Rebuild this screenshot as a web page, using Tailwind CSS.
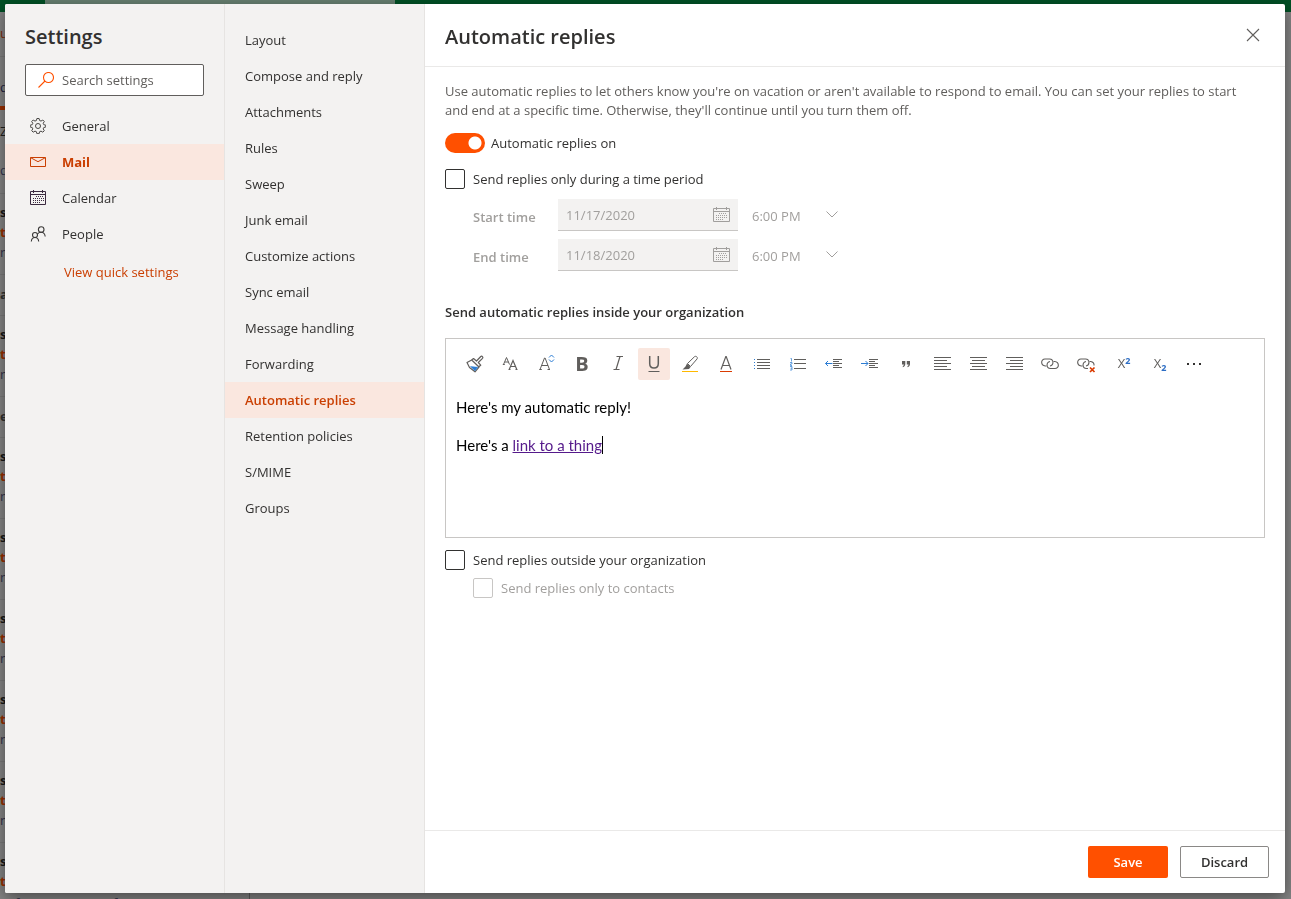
<!DOCTYPE html>
<html lang="en">
<head>
<meta charset="utf-8">
<title>Settings - Automatic replies</title>
<script src="https://cdn.jsdelivr.net/npm/@tailwindcss/browser@4"></script>
</head>
<body class="h-screen overflow-hidden bg-[#858585] font-['Open_Sans','Noto_Sans',sans-serif] text-[13px] text-[#323130]">

<!-- Dimmed mailbox behind the dialog -->
<div class="relative flex h-screen flex-col overflow-hidden" aria-hidden="true">
  <div class="flex h-3 shrink-0 bg-[#005025] pl-[45px]"><div class="w-[350px] bg-[#667f70]"></div></div>
  <div class="flex min-h-0 w-[5px] grow flex-col overflow-hidden *:flex *:shrink-0 *:flex-col *:items-start *:border-b *:border-[#7a7a7a]">
    <div class="h-[45px] justify-center text-[#7d2c0c]">u</div>
    <div class="h-[137px] text-[#1d2140]">
      <span class="pt-[21px]">d</span><span class="mt-2 h-1 w-full shrink-0 bg-[#9b3000]"></span>
      <span class="mt-3 text-[#202020]">Z</span><span class="mt-5 text-[#34344c]">d</span>
    </div>
    <div class="h-[81px] pt-2 leading-5"><b class="text-[#181818]">s</b><b class="text-[#9b3000]">t</b><span class="text-[#34344c]">n</span></div>
    <div class="h-[41px] justify-center font-bold">a</div>
    <div class="h-[81px] pt-2 leading-5"><b class="text-[#181818]">s</b><b class="text-[#9b3000]">t</b><span class="text-[#34344c]">n</span></div>
    <div class="h-[41px] justify-center font-bold">e</div>
    <div class="h-[81px] pt-2 leading-5"><b class="text-[#181818]">s</b><b class="text-[#9b3000]">t</b><span class="text-[#34344c]">n</span></div>
    <div class="h-[81px] pt-2 leading-5"><b class="text-[#181818]">s</b><b class="text-[#9b3000]">t</b><span class="text-[#34344c]">n</span></div>
    <div class="h-[81px] pt-2 leading-5"><b class="text-[#181818]">s</b><b class="text-[#9b3000]">t</b><span class="text-[#34344c]">n</span></div>
    <div class="h-[81px] pt-2 leading-5"><b class="text-[#181818]">s</b><b class="text-[#9b3000]">t</b><span class="text-[#34344c]">n</span></div>
    <div class="h-[81px] pt-2 leading-5"><b class="text-[#181818]">s</b><b class="text-[#9b3000]">t</b><span class="text-[#34344c]">n</span></div>
    <div class="h-[81px] pt-2 leading-5"><b class="text-[#181818]">s</b><b class="text-[#9b3000]">t</b></div>
  </div>
  <div class="flex h-1.5 shrink-0 overflow-hidden border-r border-[#5c5c5c] pl-[15px] leading-5 text-[#34344c] w-[250px]">
    <span class="w-[98px]">f</span><span class="w-[74px]">f</span><span>i</span>
  </div>
</div>

<div class="fixed inset-0 flex pt-1 pr-1.5 pb-1.5 pl-[5px]">
<section role="dialog" aria-labelledby="dialog-title" class="flex min-w-0 grow overflow-hidden rounded-xs bg-white shadow-[0_5px_16px_rgba(0,0,0,0.45)]">

  <!-- Categories -->
  <aside class="flex w-[220px] shrink-0 flex-col border-r border-[#e6e4e2] bg-[#f3f2f1]">
    <h1 class="mx-5 mt-[19px] mb-[13px] text-xl leading-7 font-semibold">Settings</h1>
    <label class="mx-5 flex h-8 items-center gap-2 rounded-xs border border-[#605e5c] bg-white px-3">
      <svg class="size-4 shrink-0" viewBox="0 0 16 16" fill="none" stroke="#ff5000" stroke-width="1.1"><circle cx="10.5" cy="5.5" r="5"/><path d="M7 9 0.5 15.5"/></svg>
      <input type="text" aria-label="Search settings" placeholder="Search settings" class="min-w-0 grow pt-0.5 outline-none placeholder:text-[#605e5c]">
    </label>
    <nav class="mt-3 flex flex-col [&_span]:pt-0.5" aria-label="Categories">
      <a href="#general" class="flex h-9 items-center gap-4 pl-[25px]">
        <svg class="size-4" viewBox="0 0 16 16" fill="none" stroke="#484644"><circle cx="8" cy="8" r="2.5"/><path stroke-linejoin="round" d="M6.900 .5h2.200l.5 2 1.400.6 1.800-1.100 1.500 1.500-1.100 1.800.6 1.400 2 .5v1.800l-2 .5-.6 1.400 1.100 1.800-1.500 1.500-1.800-1.100-1.400.6-.5 2H6.900l-.5-2-1.400-.6-1.800 1.100-1.500-1.500 1.100-1.800-.6-1.400-2-.5V7.200l2-.5.6-1.400-1.100-1.800 1.500-1.500L5 3.100l1.400-.6z"/></svg>
        <span>General</span></a>
      <a href="#mail" aria-current="page" class="flex h-9 items-center gap-4 bg-[#fae7df] pl-[25px] font-bold text-[#ca3f02]">
        <svg class="size-4" viewBox="0 0 16 16" fill="none" stroke="#ca3f02"><path d="M.5 3.500h15v9H.5zM.7 3.700 8 7.700l7.300-4"/></svg>
        <span>Mail</span></a>
      <a href="#calendar" class="flex h-9 items-center gap-4 pl-[25px]">
        <svg class="size-4" viewBox="0 0 16 16" fill="none" stroke="#3b2a40"><path d="M.5 1.500h15v13H.5zM.5 4.500h15M3.500 0v3M12.500 0v3"/><path stroke-dasharray="1 1" d="M6 6.500h8M3 8.500h11M3 10.500h11M3 12.500h8"/></svg>
        <span>Calendar</span></a>
      <a href="#people" class="flex h-9 items-center gap-4 pl-[25px]">
        <svg class="size-4" viewBox="0 0 16 16" fill="none" stroke="#3b3a39" stroke-width="1.1"><circle cx="11.200" cy="3.500" r="2.800"/><circle cx="5" cy="9" r="2.500"/><path d="M1.300 15.500c.2-2.500 1.700-4 3.700-4s3.500 1.500 3.700 4M7.500 8c.8-1.100 2.200-1.700 3.700-1.700 2.100 0 3.700 1.600 4 4.200"/></svg>
        <span>People</span></a>
    </nav>
    <a href="#quick" class="mt-2.5 ml-[59px] leading-5 text-[#ca3f02]">View quick settings</a>
  </aside>

  <!-- Mail sections -->
  <nav aria-label="Mail settings" class="flex w-[200px] shrink-0 flex-col border-r border-[#e6e4e2] bg-[#f3f2f1] pt-[18px] *:flex *:h-9 *:items-center *:pt-0.5 *:pl-5">
    <a href="#layout">Layout</a>
    <a href="#compose">Compose and reply</a>
    <a href="#attachments">Attachments</a>
    <a href="#rules">Rules</a>
    <a href="#sweep">Sweep</a>
    <a href="#junk">Junk email</a>
    <a href="#actions">Customize actions</a>
    <a href="#sync">Sync email</a>
    <a href="#handling">Message handling</a>
    <a href="#forwarding">Forwarding</a>
    <a href="#replies" aria-current="page" class="bg-[#fae7df] font-semibold text-[#ca3f02]">Automatic replies</a>
    <a href="#retention">Retention policies</a>
    <a href="#smime">S/MIME</a>
    <a href="#groups">Groups</a>
  </nav>

  <!-- Automatic replies -->
  <main class="flex min-w-0 grow flex-col">
    <header class="flex h-[63px] shrink-0 items-center justify-between border-b border-[#eae9e8] pt-0.5 pr-6 pl-5">
      <h2 id="dialog-title" class="pt-0.5 text-xl font-semibold">Automatic replies</h2>
      <button type="button" aria-label="Close" class="size-4"><svg viewBox="0 0 16 16" fill="none" stroke="#605e5c" stroke-width="1.100"><path d="m2 1 12 12M14 1 2 13"/></svg></button>
    </header>

    <div class="flex grow flex-col px-5 pt-[15px]">
      <p class="pr-3 leading-[19px] text-[#605e5c]">Use automatic replies to let others know you're on vacation or aren't available to respond to email. You can set your replies to start and end at a specific time. Otherwise, they'll continue until you turn them off.</p>

      <label class="mt-[13px] flex h-5 items-center gap-1.5">
        <input type="checkbox" role="switch" checked class="h-5 w-10 appearance-none rounded-full bg-[#ff5000] bg-[radial-gradient(circle_at_30px_10px,white_6px,transparent_7px)]">
        <span class="pt-0.5">Automatic replies on</span>
      </label>
      <label class="mt-4 flex h-5 items-center gap-2">
        <input type="checkbox" class="size-5 appearance-none rounded-xs border border-[#323130] bg-white">
        <span class="pt-0.5">Send replies only during a time period</span>
      </label>

      <div class="mt-2.5 ml-7 flex flex-col gap-2 text-[#a19f9d]">
        <div class="flex h-8 items-center">
          <label for="start" class="w-[85px] pt-1.5 font-semibold">Start time</label>
          <div class="flex h-8 w-[180px] items-center border-b border-[#c8c6c4] bg-[#f3f2f1] px-2">
            <input id="start" type="text" value="11/17/2020" disabled class="min-w-0 grow pt-0.5">
            <svg class="size-[17px] shrink-0" viewBox="0 0 17 17" fill="none" stroke="#a19f9d"><path d="M.5 2.500h16v13H.5zM.5 5.500h16M3.500 1v3M13.500 1v3"/><path stroke-dasharray="1 1" d="M6 7.500h8M3 9.500h11M3 11.500h11M3 13.500h8"/></svg>
          </div>
          <div class="ml-3.5 grid w-[86px] items-center">
            <select disabled aria-label="Start hour" class="col-start-1 row-start-1 appearance-none pt-1"><option>6:00 PM</option></select>
            <svg class="col-start-1 row-start-1 h-2 w-3 justify-self-end" viewBox="0 0 12 8" fill="none" stroke="#a19f9d"><path d="m.5 .5 5.500 5.500L11.500 .5"/></svg>
          </div>
        </div>
        <div class="flex h-8 items-center">
          <label for="end" class="w-[85px] pt-1.5 font-semibold">End time</label>
          <div class="flex h-8 w-[180px] items-center border-b border-[#c8c6c4] bg-[#f3f2f1] px-2">
            <input id="end" type="text" value="11/18/2020" disabled class="min-w-0 grow pt-0.5">
            <svg class="size-[17px] shrink-0" viewBox="0 0 17 17" fill="none" stroke="#a19f9d"><path d="M.5 2.500h16v13H.5zM.5 5.500h16M3.500 1v3M13.500 1v3"/><path stroke-dasharray="1 1" d="M6 7.500h8M3 9.500h11M3 11.500h11M3 13.500h8"/></svg>
          </div>
          <div class="ml-3.5 grid w-[86px] items-center">
            <select disabled aria-label="End hour" class="col-start-1 row-start-1 appearance-none pt-1"><option>6:00 PM</option></select>
            <svg class="col-start-1 row-start-1 h-2 w-3 justify-self-end" viewBox="0 0 12 8" fill="none" stroke="#a19f9d"><path d="m.5 .5 5.500 5.500L11.500 .5"/></svg>
          </div>
        </div>
      </div>

      <h3 class="mt-[31px] leading-5 font-semibold">Send automatic replies inside your organization</h3>

      <div class="mt-4 flex h-[200px] flex-col border border-[#c8c6c4]">
        <div role="toolbar" aria-label="Formatting" class="flex gap-1 px-3 pt-[9px] text-[#605e5c] *:flex *:size-8 *:shrink-0 *:items-center *:justify-center [&_svg]:size-5">
          <button type="button" aria-label="Format painter"><svg viewBox="0 0 20 20" fill="none" stroke="#605e5c" stroke-width="1.200" stroke-linejoin="round"><path d="M9.500 4.500 12.500 7l4.300-4.500c1-1 2.700.7 1.700 1.800L14.300 8.500l2.400 2.700-2 1.600L7.700 6z"/><path d="M7.700 6 3 8.500l2.500 5 5.500 4.300 4.200-5"/><path fill="#2b7cd3" stroke="#2b7cd3" stroke-width=".5" d="m6.500 12.500 7.300.8-2.800 3.500z"/></svg></button>
          <button type="button" aria-label="Font"><svg viewBox="0 0 20 20" fill="none" stroke="#605e5c"><path d="M3.500 10.500 6.500 3.500l3 7M4.700 8h3.800M2.800 10.500h2"/><path stroke-width="1.200" d="m9.200 15.500 3.800-9 3.800 9M10.700 12.500h4.800M8.500 15.500h2M15.500 15.500h2"/></svg></button>
          <button type="button" aria-label="Font size"><svg viewBox="0 0 20 20" fill="none" stroke="#605e5c"><path d="M4 15.500 8.500 4h.6L13.500 15.500M5.500 11.500h6.500M3.300 15.500h2.500M11.500 15.500h2.500"/><path stroke="#2b7cd3" d="m13 3.500 2.500-2.500 2.500 2.500M13 5.500 15.500 8l2.500-2.500"/></svg></button>
          <button type="button" aria-label="Bold" class="text-xl leading-5 font-bold">B</button>
          <button type="button" aria-label="Italic"><svg viewBox="0 0 20 20" fill="none" stroke="#605e5c" stroke-width="1.200"><path d="M8.500 2.500h6.500M12 2.500 8 15.500M5.500 15.500h6"/></svg></button>
          <button type="button" aria-label="Underline" aria-pressed="true" class="rounded-xs bg-[#fae7df]"><svg viewBox="0 0 20 20" fill="none" stroke="#605e5c" stroke-width="1.500"><path d="M5.700 2v7.500c0 3 1.500 4.500 4.300 4.500s4.300-1.500 4.300-4.500V2"/><path stroke-width="1" d="M4.500 17.500h11"/></svg></button>
          <button type="button" aria-label="Highlight"><svg viewBox="0 0 20 20" fill="none" stroke="#605e5c" stroke-linejoin="round"><path d="m7.500 9.500 7-6.800c1.500-1.200 3.700.7 2.500 2.300l-6.500 7.500z"/><path fill="#605e5c" stroke="none" d="M7 9.500 10.500 13 9 15l-6.500.5 3-3z"/><path stroke="#ffb900" d="M2 17.500h16"/></svg></button>
          <button type="button" aria-label="Font color"><svg viewBox="0 0 20 20" fill="none" stroke="#605e5c" stroke-width="1.200"><path d="M5 15.500 9.800 2.500h.4L15 15.500M6.700 11.500h6.600"/><path stroke="#da3b01" stroke-width="1" d="M4 17.500h12"/></svg></button>
          <button type="button" aria-label="Bulleted list"><svg viewBox="0 0 20 20" fill="none" stroke="#605e5c"><path d="M5 5.500h13M5 8.500h13M5 11.500h13M5 14.500h13"/><path stroke="#2b7cd3" d="M2 5.500h1M2 8.500h1M2 11.500h1M2 14.500h1"/></svg></button>
          <button type="button" aria-label="Numbered list"><svg viewBox="0 0 20 20" fill="none" stroke="#605e5c"><path d="M6 5.500h12M6 9.500h12M6 14.500h12"/><path stroke="#2b7cd3" stroke-width=".7" d="M2.500 4.500h1v3M2 8.500h2V10H2.500v1.500H4M2 12.500h2v3.500H2M2.500 14.200H4"/></svg></button>
          <button type="button" aria-label="Decrease indent"><svg viewBox="0 0 20 20" fill="none" stroke="#605e5c"><path d="M9 5.500h9M9 7.500h6M9 9.500h9M9 11.500h6M9 13.500h9"/><path stroke="#2b7cd3" d="M1.500 9.500h7M4 7 1.500 9.500 4 12"/></svg></button>
          <button type="button" aria-label="Increase indent"><svg viewBox="0 0 20 20" fill="none" stroke="#605e5c"><path d="M9 5.500h9M9 7.500h6M9 9.500h9M9 11.500h6M9 13.500h9"/><path stroke="#2b7cd3" d="M1 9.500h7M5.500 7 8 9.500 5.500 12"/></svg></button>
          <button type="button" aria-label="Quote"><svg viewBox="0 0 20 20" fill="#605e5c"><path d="M6 7h3.300v3c0 1.500-.8 3-2.500 3.300v-1.200c.7-.3 1-1 1-1.600H6zM10.800 7H14v3c0 1.500-.8 3-2.500 3.300v-1.200c.7-.3 1-1 1-1.600h-1.700z"/></svg></button>
          <button type="button" aria-label="Align left"><svg viewBox="0 0 20 20" fill="none" stroke="#605e5c"><path d="M2 3.500h17M2 6.500h13M2 9.500h17M2 12.500h13M2 15.500h17"/></svg></button>
          <button type="button" aria-label="Align center"><svg viewBox="0 0 20 20" fill="none" stroke="#605e5c"><path d="M2 3.500h17M4 6.500h13M2 9.500h17M4 12.500h13M2 15.500h17"/></svg></button>
          <button type="button" aria-label="Align right"><svg viewBox="0 0 20 20" fill="none" stroke="#605e5c"><path d="M2 3.500h17M6 6.500h13M2 9.500h17M6 12.500h13M2 15.500h17"/></svg></button>
          <button type="button" aria-label="Insert link"><svg viewBox="0 0 20 20" fill="none" stroke="#605e5c" stroke-width="1.100"><path d="M6.500 12H5.300C.5 11.500.5 5 5 5h4.500c4.500.2 4.500 6.200.5 7"/><path d="M13.500 7.500h1.200c4.800.5 4.800 7 .3 7h-4.500c-4.500-.2-4.500-6.200-.5-7"/></svg></button>
          <button type="button" aria-label="Remove link"><svg viewBox="0 0 20 20" fill="none" stroke="#605e5c" stroke-width="1.100"><path d="M6.500 12H5.300C.5 11.500.5 5 5 5h4.500c4.500.2 4.500 6.200.5 7"/><path d="M13.500 7.500h1.200c2.500.3 3.600 2.200 3.300 4M12 14.500h-1.500c-4.500-.2-4.500-6.200-.5-7"/><path stroke="#da3b01" stroke-width="1.700" d="m14 13.500 4.500 4.500m0-4.500L14 18"/></svg></button>
          <button type="button" aria-label="Superscript" class="pl-1"><span>X<sup class="text-[9px] font-bold text-[#2b6cc4]">2</sup></span></button>
          <button type="button" aria-label="Subscript" class="pl-1"><span>X<sub class="text-[9px] font-bold text-[#2b6cc4]">2</sub></span></button>
          <button type="button" aria-label="More options"><svg viewBox="0 0 20 20" fill="#323130"><path d="M3 9h2v2H3zM9 9h2v2H9zM15 9h2v2h-2z"/></svg></button>
        </div>
        <div role="textbox" aria-multiline="true" aria-label="Reply message" contenteditable="true" class="mt-[18px] flex grow flex-col gap-[19px] px-2.5 font-['Lato',sans-serif] text-[15px] leading-[19px] text-black outline-none">
          <p>Here's my automatic reply!</p>
          <p>Here's a <a href="#thing" class="border-r border-black text-[#551a8b] underline">link to a thing</a></p>
        </div>
      </div>

      <label class="mt-3 flex h-5 items-center gap-2">
        <input type="checkbox" class="size-5 appearance-none rounded-xs border border-[#323130] bg-white">
        <span class="pt-0.5">Send replies outside your organization</span>
      </label>
      <label class="mt-2 ml-7 flex h-5 items-center gap-2 text-[#a19f9d]">
        <input type="checkbox" disabled class="size-5 appearance-none rounded-xs border border-[#c8c6c4] bg-white">
        <span class="pt-0.5">Send replies only to contacts</span>
      </label>
    </div>

    <footer class="flex shrink-0 justify-end gap-3 border-t border-[#eae9e8] py-[15px] pr-4 font-semibold">
      <button type="button" class="h-8 w-20 rounded-xs bg-[#ff5000] pt-0.5 text-white">Save</button>
      <button type="button" class="h-8 w-[89px] rounded-xs border border-[#8a8886] bg-white pt-0.5">Discard</button>
    </footer>
  </main>
</section>
</div>
</body>
</html>
